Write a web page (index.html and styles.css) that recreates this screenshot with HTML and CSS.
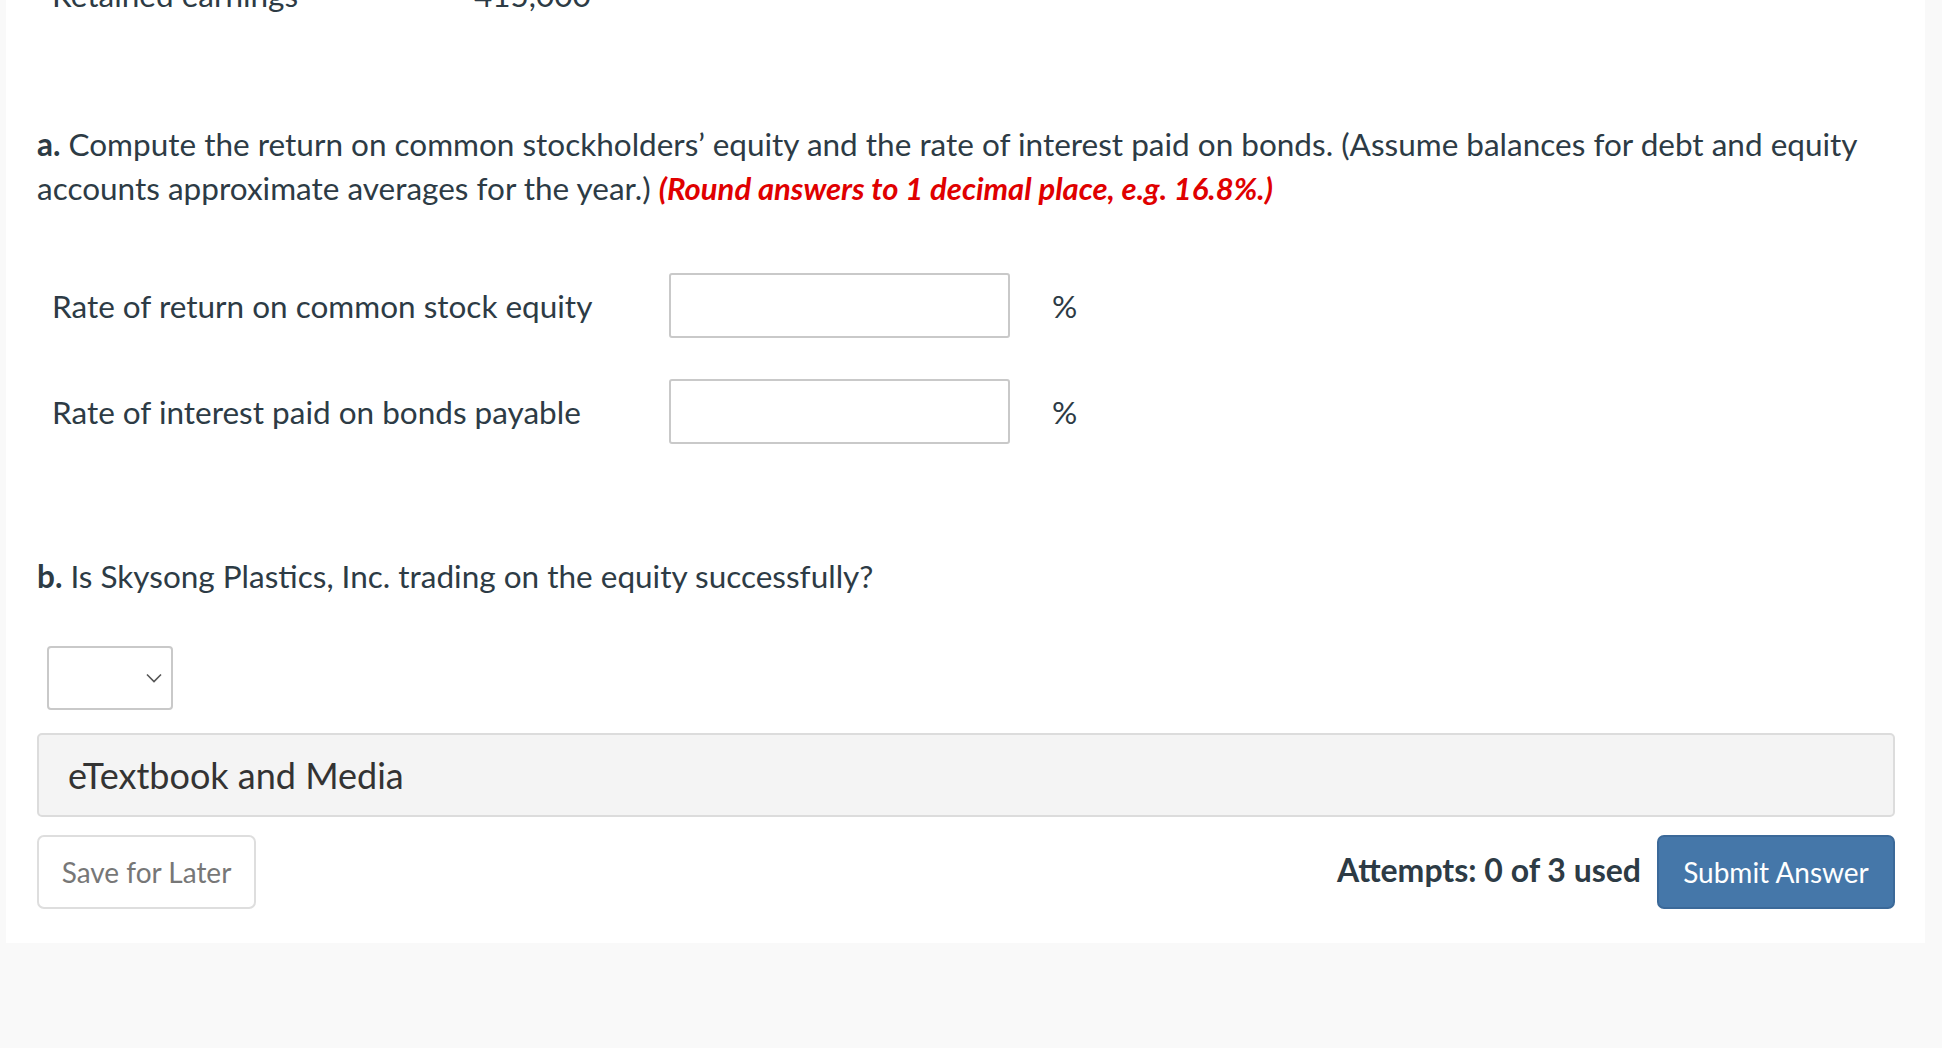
FILE: index.html
```html
<!DOCTYPE html>
<html lang="en">
<head>
<meta charset="utf-8">
<title>Question</title>
<link rel="stylesheet" href="styles.css">
</head>
<body>
<main class="panel">
  <div class="prev-row">
    <span class="prev-label">Retained earnings</span>
    <span class="prev-value">415,000</span>
  </div>

  <p class="question"><b>a.</b> Compute the return on common stockholders’ equity and the rate of interest paid on bonds. (Assume balances for debt and equity accounts approximate averages for the year.) <em class="hint">(Round answers to 1 decimal place, e.g. 16.8%.)</em></p>

  <div class="answers">
    <div class="answer-row">
      <span class="answer-label">Rate of return on common stock equity</span>
      <input class="answer-input" type="text" aria-label="Rate of return on common stock equity">
      <span class="unit">%</span>
    </div>
    <div class="answer-row">
      <span class="answer-label">Rate of interest paid on bonds payable</span>
      <input class="answer-input" type="text" aria-label="Rate of interest paid on bonds payable">
      <span class="unit">%</span>
    </div>
  </div>

  <p class="question question-b"><b>b.</b> Is Skysong Plastics, Inc. trading on the equity successfully?</p>

  <div class="select-box">
    <svg class="chevron" width="16" height="10" viewBox="0 0 16 10"><path d="M1 1.5 L8 8.5 L15 1.5" fill="none" stroke="#555" stroke-width="1.6"/></svg>
  </div>

  <div class="media">eTextbook and Media</div>

  <div class="footer">
    <button class="btn-save">Save for Later</button>
    <div class="footer-right">
      <span class="attempts">Attempts: 0 of 3 used</span>
      <button class="btn-submit">Submit Answer</button>
    </div>
  </div>
</main>
</body>
</html>
```

FILE: styles.css
```css
html, body {
  margin: 0;
  padding: 0;
  background: #f9f9f9;
}

body {
  font-family: Lato, "Liberation Sans", sans-serif;
  color: #2d3b45;
  height: 1048px;
  overflow: hidden;
}

.panel {
  margin-left: 6px;
  width: 1858px;
  background: #fff;
  padding: 0 30px 34px 31px;
}

.prev-row {
  display: flex;
  font-size: 31.5px;
  line-height: 40px;
  margin-top: -25px;
  padding-left: 15px;
}

.prev-label {
  width: 422px;
}

.question {
  margin: 107px 0 0;
  font-size: 31.5px;
  line-height: 44px;
}

.question b {
  font-weight: 700;
}

.hint {
  color: #e00000;
  font-weight: 700;
  font-style: italic;
  font-size: 31px;
}

.answers {
  margin-top: 63px;
  padding-left: 15px;
  display: flex;
  flex-direction: column;
  gap: 41px;
}

.answer-row {
  display: flex;
  align-items: center;
  font-size: 31.5px;
}

.answer-label {
  width: 617px;
}

.answer-input {
  box-sizing: border-box;
  width: 341px;
  height: 65px;
  border: 2px solid #c9c9c9;
  border-radius: 3px;
  background: #fff;
  margin: 0;
  font: inherit;
}

.unit {
  margin-left: 42px;
}

.question-b {
  margin-top: 110px;
}

.select-box {
  box-sizing: border-box;
  margin: 48px 0 0 10px;
  width: 126px;
  height: 64px;
  border: 2px solid #c9c9c9;
  border-radius: 4px;
  display: flex;
  align-items: center;
  justify-content: flex-end;
  padding-right: 9px;
}

.chevron {
  display: block;
}

.media {
  box-sizing: border-box;
  margin-top: 23px;
  height: 84px;
  background: #f4f4f4;
  border: 2px solid #dcdcdc;
  border-radius: 5px;
  padding-left: 29px;
  display: flex;
  align-items: center;
  font-size: 36px;
  color: #333;
}

.footer {
  margin-top: 18px;
  display: flex;
  justify-content: space-between;
  align-items: center;
}

.btn-save {
  box-sizing: border-box;
  width: 219px;
  height: 74px;
  background: #fff;
  border: 2px solid #dedede;
  border-radius: 7px;
  font-family: Lato, "Liberation Sans", sans-serif;
  font-size: 28px;
  color: #777;
  padding: 0;
}

.footer-right {
  display: flex;
  align-items: center;
  gap: 16px;
}

.attempts {
  font-size: 32px;
  font-weight: 700;
  color: #2d3b45;
  padding-bottom: 6px;
}

.btn-submit {
  box-sizing: border-box;
  width: 238px;
  height: 74px;
  background: #4577a9;
  border: 2px solid #3b6999;
  border-radius: 7px;
  font-family: Lato, "Liberation Sans", sans-serif;
  font-size: 28px;
  color: #fff;
  padding: 0;
}
```
